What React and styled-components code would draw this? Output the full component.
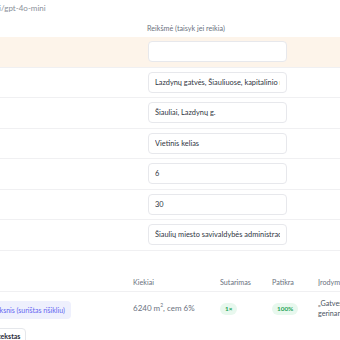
import React from "react";
import styled, { createGlobalStyle } from "styled-components";

const Global = createGlobalStyle`
  html, body { margin: 0; padding: 0; background: #ffffff; overflow: hidden; }
  body { font-family: Lato, "Noto Sans", sans-serif; color: #374151; }
`;

const Page = styled.div`
  margin-left: -160px;
  width: 720px;
  display: flex;
  flex-direction: column;
`;

const Meta = styled.div`
  display: flex;
  height: 16px;
  align-items: center;
  font-size: 8px;
  color: #8a8f99;
`;

const MetaPrefix = styled.span`
  width: 161px;
  text-align: right;
  white-space: nowrap;
`;

const FieldTable = styled.div`
  display: grid;
  grid-template-columns: 300px 1fr;
  margin-top: 3px;
`;

const HeadCell = styled.div`
  height: 18px;
  display: flex;
  align-items: center;
  padding-left: 7px;
  font-size: 7.2px;
  color: #6b7280;
`;

const Row = styled.div`
  display: contents;
`;

const Cell = styled.div`
  height: 29.5px;
  display: flex;
  align-items: center;
  padding-left: 8px;
  border-bottom: 1px solid #f0f0f2;
  background: ${(p) => (p.$warn ? "#fdf4ea" : "transparent")};
  font-size: 8px;
  color: #374151;
`;

const Input = styled.input`
  box-sizing: border-box;
  width: 139px;
  height: 21px;
  border: 1px solid #e7e8ec;
  border-radius: 4px;
  background: #ffffff;
  padding: 0 6px;
  font-family: Lato, "Noto Sans", sans-serif;
  font-size: 7.4px;
  color: #2f3542;
  outline: none;
`;

const ResultTable = styled.div`
  display: grid;
  grid-template-columns: 181px 87px 52px 46px 1fr;
  margin-top: 24px;
  margin-left: 104px;
`;

const RHead = styled.div`
  height: 16px;
  display: flex;
  align-items: center;
  padding-left: 8px;
  border-bottom: 1px solid #f0f0f2;
  font-size: 7.2px;
  color: #6b7280;
  white-space: nowrap;
`;

const RCell = styled.div`
  padding: 9px 0 0 8px;
  display: flex;
  flex-direction: column;
  align-items: flex-start;
  gap: 9px;
  font-size: 8px;
  color: #6b7280;
`;

const TagRow = styled.div`
  display: flex;
  align-items: center;
  gap: 4px;
`;

const TagLabel = styled.span`
  font-size: 7px;
  color: #9ca3af;
  white-space: nowrap;
`;

const TypeChip = styled.span`
  height: 18px;
  display: inline-flex;
  align-items: center;
  padding: 0 6px;
  border-radius: 4px;
  background: #eef0fd;
  color: #6366f1;
  font-size: 7px;
  white-space: nowrap;
`;

const TagChip = styled.span`
  height: 14px;
  display: inline-flex;
  align-items: center;
  padding: 0 5px;
  border: 1px solid #e5e7eb;
  border-radius: 4px;
  background: #fff;
  color: #1f2937;
  font-size: 7px;
  font-weight: 700;
  white-space: nowrap;
`;

const Qty = styled.span`
  margin-top: 1px;
  font-size: 8px;
  color: #6b7280;
  sup { font-size: 5px; }
`;

const Pill = styled.span`
  margin-top: 2px;
  height: 12px;
  display: inline-flex;
  align-items: center;
  padding: 0 5px;
  border-radius: 6px;
  background: #e8f8ee;
  color: #22a355;
  font-size: 6.4px;
  font-weight: 700;
`;

const Evidence = styled.span`
  font-size: 7.2px;
  line-height: 10px;
  color: #4b5563;
  margin-top: -2px;
  width: 36px;
`;

const fields = [
  { value: "", warn: true },
  { value: "Lazdynų gatvės, Šiauliuose, kapitalinio remonto darbai" },
  { value: "Šiauliai, Lazdynų g." },
  { value: "Vietinis kelias" },
  { value: "6" },
  { value: "30" },
  { value: "Šiaulių miesto savivaldybės administracija" },
];

export default function App() {
  return (
    <>
      <Global />
      <Page>
        <Meta>
          <MetaPrefix>Modelis: openai</MetaPrefix>
          <span>/gpt-4o-mini</span>
        </Meta>
        <FieldTable>
          <HeadCell>Laukas</HeadCell>
          <HeadCell>Reikšmė (taisyk jei reikia)</HeadCell>
          {fields.map((f, i) => (
            <Row key={i}>
              <Cell $warn={f.warn}>Laukas {i + 1}</Cell>
              <Cell $warn={f.warn}>
                <Input defaultValue={f.value} readOnly />
              </Cell>
            </Row>
          ))}
        </FieldTable>
        <ResultTable>
          <RHead>Pozicija</RHead>
          <RHead>Kiekiai</RHead>
          <RHead>Sutarimas</RHead>
          <RHead>Patikra</RHead>
          <RHead>Įrodymai</RHead>
          <RCell>
            <TypeChip>Pagrindo sluoksnis (surištas rišikliu)</TypeChip>
            <TagRow>
              <TagLabel>Šaltinis:</TagLabel>
              <TagChip>Kontekstas</TagChip>
            </TagRow>
          </RCell>
          <RCell>
            <Qty>
              6240 m<sup>2</sup>, cem 6%
            </Qty>
          </RCell>
          <RCell>
            <Pill>1×</Pill>
          </RCell>
          <RCell>
            <Pill>100%</Pill>
          </RCell>
          <RCell>
            <Evidence>„Gatves gerinant</Evidence>
          </RCell>
        </ResultTable>
      </Page>
    </>
  );
}
